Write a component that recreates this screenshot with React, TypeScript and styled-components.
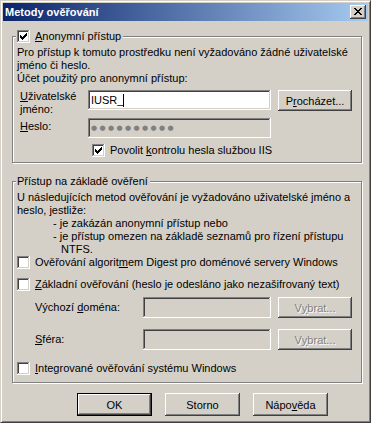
import React, { FC, ReactNode } from 'react';
import styled, { createGlobalStyle, css } from 'styled-components';

const FACE = '#D4D0C8';

const GlobalStyle = createGlobalStyle`
  html, body {
    margin: 0;
    padding: 0;
    background: #ffffff;
  }
  body {
    font-family: "Liberation Sans", Arial, sans-serif;
    font-size: 11px;
    color: #000;
  }
`;

const raised = css`
  box-shadow: inset -1px -1px 0 #404040, inset 1px 1px 0 #ffffff, inset -2px -2px 0 #808080;
`;

const sunken = css`
  box-shadow: inset -1px -1px 0 #ffffff, inset 1px 1px 0 #808080, inset -2px -2px 0 ${FACE}, inset 2px 2px 0 #404040;
`;

const Window = styled.div`
  width: 371px;
  height: 423px;
  box-sizing: border-box;
  background: ${FACE};
  border: 1px solid;
  border-color: ${FACE} #404040 #404040 ${FACE};
  box-shadow: inset 1px 1px 0 #ffffff, inset -1px -1px 0 #808080;
  padding: 2px;
  display: flex;
  flex-direction: column;
`;

const TitleBar = styled.div`
  height: 18px;
  flex: none;
  display: flex;
  align-items: center;
  justify-content: space-between;
  padding: 0 2px 0 2px;
  background: linear-gradient(to right, #0a246a, #a6caf0);
  color: #fff;
  font-weight: bold;
  font-size: 11px;
`;

const CloseButton = styled.div`
  width: 16px;
  height: 14px;
  background: ${FACE};
  ${raised};
  display: flex;
  align-items: center;
  justify-content: center;
  svg { display: block; margin: 0 0 1px 0; }
`;

const Body = styled.div`
  padding: 9px 6px 0 9px;
  display: flex;
  flex-direction: column;
`;

const Group = styled.fieldset<{ $gap: number; $pb: number }>`
  margin: ${(p) => p.$gap}px 0 0 0;
  border: 1px solid #808080;
  box-shadow: 1px 1px 0 #ffffff, inset 1px 1px 0 #ffffff;
  padding: 3px 4px ${(p) => p.$pb}px 4px;
  min-width: 0;
`;

const Legend = styled.legend`
  margin-left: -1px;
  padding: 0 2px 0 1px;
  background: ${FACE};
  line-height: 13px;
  display: flex;
  align-items: center;
  gap: 5px;
`;

const Text = styled.div<{ $indent?: number }>`
  line-height: 13px;
  margin-left: ${(p) => p.$indent || 0}px;
`;

const Bullet = styled.div`
  line-height: 13px;
  margin-left: 36px;
  padding-left: 8px;
  text-indent: -8px;
`;

const CheckRow = styled.label<{ $top: number; $left?: number }>`
  display: flex;
  align-items: center;
  gap: 5px;
  height: 13px;
  line-height: 13px;
  margin: ${(p) => p.$top}px 0 0 ${(p) => p.$left || 0}px;
  white-space: nowrap;
`;

const Box = styled.span`
  width: 13px;
  height: 13px;
  flex: none;
  box-sizing: border-box;
  background: #fff;
  ${sunken};
  display: flex;
  align-items: flex-start;
  justify-content: flex-start;
  svg { display: block; margin: 3px 0 0 3px; }
`;

const FieldGrid = styled.div<{ $top: number; $left: number; $label: number; $field: number; $rowGap: number }>`
  display: grid;
  grid-template-columns: ${(p) => p.$label}px ${(p) => p.$field}px 74px;
  column-gap: 7px;
  row-gap: ${(p) => p.$rowGap}px;
  margin: ${(p) => p.$top}px 0 0 ${(p) => p.$left}px;
  align-items: start;
`;

const Label = styled.div<{ $pt?: number }>`
  line-height: 13px;
  padding-top: ${(p) => p.$pt || 0}px;
  white-space: nowrap;
`;

const Field = styled.div<{ $disabled?: boolean; $h: number }>`
  height: ${(p) => p.$h}px;
  box-sizing: border-box;
  background: ${(p) => (p.$disabled ? FACE : '#ffffff')};
  ${sunken};
  padding: 0 3px;
  display: flex;
  align-items: center;
  line-height: 13px;
`;

const Caret = styled.span`
  display: inline-block;
  width: 1px;
  height: 13px;
  background: #000;
`;

const Dots = styled.span`
  font-family: "DejaVu Sans", sans-serif;
  font-size: 7px;
  letter-spacing: 2.4px;
  color: #808080;
`;

const Button = styled.div<{ $w: number; $h: number; $default?: boolean; $disabled?: boolean }>`
  width: ${(p) => p.$w}px;
  height: ${(p) => p.$h}px;
  box-sizing: border-box;
  background: ${FACE};
  display: flex;
  align-items: center;
  justify-content: center;
  color: ${(p) => (p.$disabled ? '#808080' : '#000')};
  text-shadow: ${(p) => (p.$disabled ? '1px 1px 0 #ffffff' : 'none')};
  ${(p) => (p.$default
    ? css`
      border: 1px solid #000;
      box-shadow: inset -1px -1px 0 #404040, inset 1px 1px 0 #ffffff, inset -2px -2px 0 #808080;
    `
    : raised)};
`;

const ButtonRow = styled.div`
  display: flex;
  gap: 13px;
  margin-top: 10px;
  padding-left: 65px;
`;

const CloseGlyph: FC = () => {
  const rows: [number, number, number][] = [
    [0, 0, 2], [6, 0, 2], [1, 1, 2], [5, 1, 2], [2, 2, 4], [3, 3, 2],
    [2, 4, 4], [1, 5, 2], [5, 5, 2], [0, 6, 2], [6, 6, 2],
  ];
  return (
    <svg width="8" height="7" viewBox="0 0 8 7" shapeRendering="crispEdges">
      {rows.map(([x, y, w]) => <rect key={`${x}-${y}`} x={x} y={y} width={w} height={1} fill="#000" />)}
    </svg>
  );
};

const CheckGlyph: FC = () => {
  const rows: [number, number, number][] = [
    [6, 0, 1], [5, 1, 2], [0, 2, 1], [4, 2, 3], [0, 3, 2], [3, 3, 3],
    [0, 4, 5], [1, 5, 3], [2, 6, 1],
  ];
  return (
    <svg width="7" height="7" viewBox="0 0 7 7" shapeRendering="crispEdges">
      {rows.map(([x, y, w]) => <rect key={`${x}-${y}`} x={x} y={y} width={w} height={1} fill="#000" />)}
    </svg>
  );
};

const Check: FC<{ checked?: boolean; children: ReactNode; top?: number; left?: number }> = ({
  checked, children, top = 0, left = 0,
}) => (
  <CheckRow $top={top} $left={left}>
    <Box>{checked && <CheckGlyph />}</Box>
    <span>{children}</span>
  </CheckRow>
);

export default function App() {
  return (
    <>
      <GlobalStyle />
      <Window>
        <TitleBar>
          <span>Metody ověřování</span>
          <CloseButton><CloseGlyph /></CloseButton>
        </TitleBar>
        <Body>
          <Group $gap={0} $pb={5}>
            <Legend>
              <Box><CheckGlyph /></Box>
              <span><u>A</u>nonymní přístup</span>
            </Legend>
            <Text>
              Pro přístup k tomuto prostředku není vyžadováno žádné uživatelské
              <br />
              jméno či heslo.
            </Text>
            <Text>Účet použitý pro anonymní přístup:</Text>
            <FieldGrid $top={5} $left={3} $label={61} $field={183} $rowGap={2}>
              <Label><u>U</u>živatelské<br />jméno:</Label>
              <Field $h={20}>IUSR_<Caret /></Field>
              <Button $w={74} $h={21}>P<u>r</u>ocházet...</Button>
              <Label $pt={2}><u>H</u>eslo:</Label>
              <Field $h={20} $disabled><Dots>●●●●●●●●●●</Dots></Field>
            </FieldGrid>
            <Check checked top={6} left={75}>Povolit <u>k</u>ontrolu hesla službou IIS</Check>
          </Group>

          <Group $gap={12} $pb={7}>
            <Legend>Přístup na základě ověření</Legend>
            <Text>
              U následujících metod ověřování je vyžadováno uživatelské jméno a
              <br />
              heslo, jestliže:
            </Text>
            <Bullet>- je zakázán anonymní přístup nebo</Bullet>
            <Bullet>- je přístup omezen na základě seznamů pro řízení přístupu NTFS.</Bullet>
            <Check>Ověřování algorit<u>m</u>em Digest pro doménové servery Windows</Check>
            <Check top={9}><u>Z</u>ákladní ověřování (heslo je odesláno jako nezašifrovaný text)</Check>
            <FieldGrid $top={6} $left={18} $label={101} $field={128} $rowGap={11}>
              <Label $pt={4}>Výchozí <u>d</u>oména:</Label>
              <Field $h={21} $disabled />
              <Button $w={74} $h={21} $disabled>V<u>y</u>brat...</Button>
              <Label $pt={4}><u>S</u>féra:</Label>
              <Field $h={21} $disabled />
              <Button $w={74} $h={21} $disabled>V<u>y</u>brat...</Button>
            </FieldGrid>
            <Check top={12}><u>I</u>ntegrované ověřování systému Windows</Check>
          </Group>

          <ButtonRow>
            <Button $w={75} $h={23} $default>OK</Button>
            <Button $w={75} $h={23}>Storno</Button>
            <Button $w={75} $h={23}>Nápo<u>v</u>ěda</Button>
          </ButtonRow>
        </Body>
      </Window>
    </>
  );
}
